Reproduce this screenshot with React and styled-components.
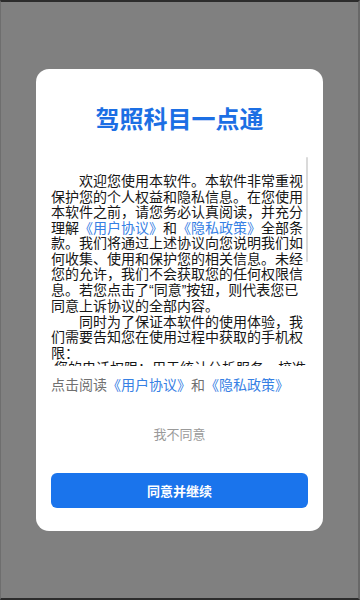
import React from "react";
import styled, { createGlobalStyle } from "styled-components";

const Global = createGlobalStyle`
  html, body {
    margin: 0;
    padding: 0;
    height: 100%;
    background: #808080;
  }
  *, *::before, *::after { box-sizing: border-box; }
  body {
    font-family: "Noto Sans CJK SC", "Noto Sans", sans-serif;
  }
`;

const Screen = styled.div`
  height: 100vh;
  display: flex;
  align-items: center;
  justify-content: center;
  background: #808080;
  border-top: 2px solid #2c2c2c;
  border-bottom: 2px solid #2c2c2c;
  border-left: 1px solid #6e6e6e;
  border-right: 2px solid #686868;
`;

const Card = styled.div`
  width: 287px;
  background: #ffffff;
  border-radius: 13px;
  padding: 35px 15px 23px;
  display: flex;
  flex-direction: column;
`;

const Title = styled.h1`
  margin: 0;
  text-align: center;
  font-size: 24px;
  line-height: 28px;
  font-weight: 700;
  color: #1c6fe4;
  font-family: "Noto Sans CJK SC", sans-serif;
`;

const ScrollArea = styled.div`
  position: relative;
  height: 209px;
  margin-top: 25px;
`;

const Scroller = styled.div`
  height: 100%;
  overflow-y: auto;
  padding-top: 16px;
  scrollbar-width: none;
  &::-webkit-scrollbar { display: none; }
`;

const Thumb = styled.div`
  position: absolute;
  top: 0;
  right: 0;
  width: 2px;
  height: 105px;
  border-radius: 1px;
  background: #dadada;
`;

const Para = styled.p`
  margin: 0;
  font-size: 14px;
  line-height: 15.5px;
  color: #161616;
  text-indent: ${(p) => p.$indent || "0"};
  word-break: break-all;
`;

const Link = styled.span`
  color: #3680e4;
`;

const Quote = styled.span`
  font-family: "Liberation Sans", sans-serif;
`;

const Notice = styled.div`
  margin-top: 9px;
  font-size: 14px;
  line-height: 18px;
  color: #707070;
`;

const Decline = styled.button`
  margin-top: 20px;
  height: 40px;
  border: none;
  background: transparent;
  color: #9a9a9a;
  font-size: 13px;
  font-family: "Noto Sans CJK SC", sans-serif;
  padding: 0;
`;

const Agree = styled.button`
  margin-top: 20px;
  height: 35px;
  border: none;
  border-radius: 6px;
  background: #1a74ec;
  color: #ffffff;
  font-size: 13px;
  font-weight: 700;
  font-family: "Noto Sans CJK SC", sans-serif;
  padding: 0;
`;

export default function App() {
  return (
    <>
      <Global />
      <Screen>
        <Card>
          <Title>驾照科目一点通</Title>
          <ScrollArea>
            <Scroller>
              <Para $indent="2em">
                欢迎您使用本软件。本软件非常重视保护您的个人权益和隐私信息。在您使用本软件之前，请您务必认真阅读，并充分理解
                <Link>《用户协议》</Link>和<Link>《隐私政策》</Link>
                全部条款。我们将通过上述协议向您说明我们如何收集、使用和保护您的相关信息。未经您的允许，我们不会获取您的任何权限信息。若您点击了
                <Quote>“</Quote>同意<Quote>”</Quote>
                按钮，则代表您已同意上诉协议的全部内容。
              </Para>
              <Para $indent="2em">
                同时为了保证本软件的使用体验，我们需要告知您在使用过程中获取的手机权限：
              </Para>
              <Para $indent="3px">
                您的电话权限：用于统计分析服务，校准数据，保障软件的正常运行；
              </Para>
              <Para $indent="3px">
                您的存储权限：用于缓存题库、图片及视频数据，减少流量消耗，提升加载速度；
              </Para>
              <Para $indent="3px">
                您的设备信息：用于识别设备，保障账号安全，防止恶意刷题等行为。
              </Para>
              <Para $indent="2em">
                我们会严格遵守相关法律法规，采取必要的安全措施保护您的个人信息安全。如您不同意上述内容，将无法正常使用本软件的部分功能。
              </Para>
            </Scroller>
            <Thumb />
          </ScrollArea>
          <Notice>
            点击阅读<Link>《用户协议》</Link>和<Link>《隐私政策》</Link>
          </Notice>
          <Decline>我不同意</Decline>
          <Agree>同意并继续</Agree>
        </Card>
      </Screen>
    </>
  );
}
